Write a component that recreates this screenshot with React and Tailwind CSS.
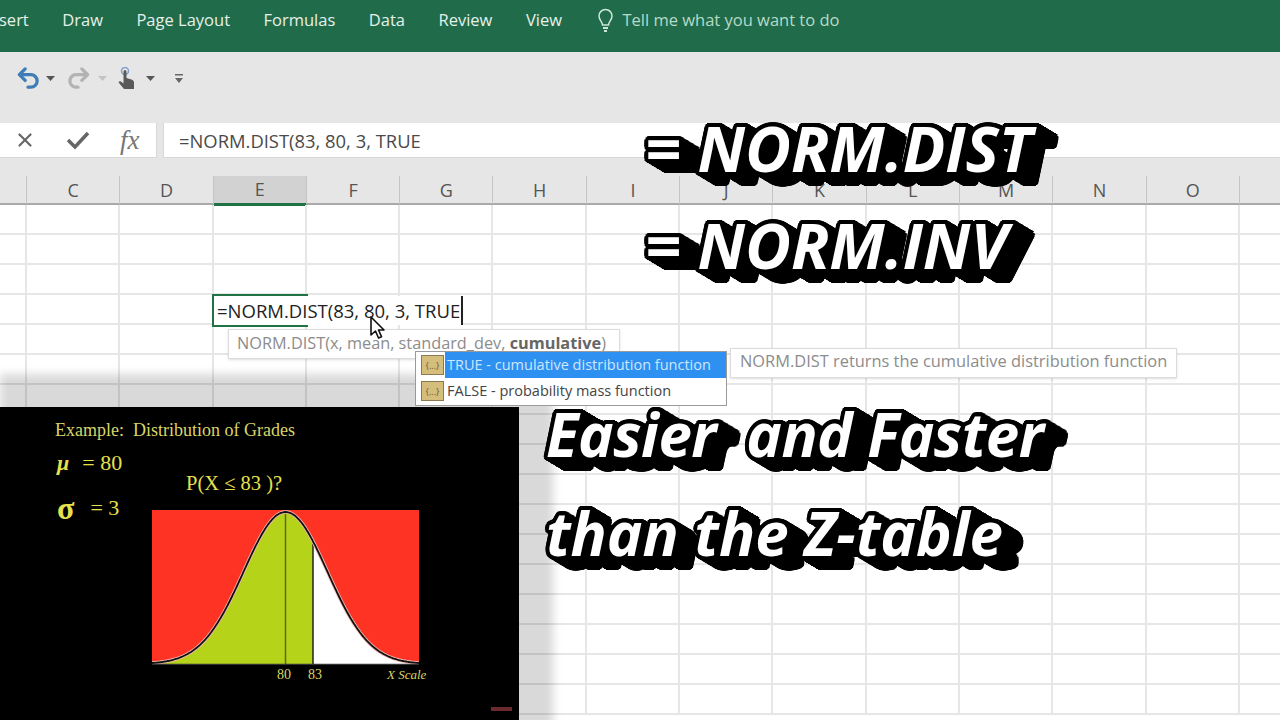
import { X } from 'lucide-react'

const tabs = ['sert', 'Draw', 'Page Layout', 'Formulas', 'Data', 'Review', 'View']
const columns = ['', 'C', 'D', 'E', 'F', 'G', 'H', 'I', 'J', 'K', 'L', 'M', 'N', 'O', '']
const rows = Array.from({ length: 17 }, (_, i) => i)

// white italic title: round black ring from text-shadow, extruded with a chain of drop-shadows
const bigText =
  "absolute whitespace-pre font-['Open_Sans',sans-serif] font-bold italic text-white [text-shadow:4px_0_0_#000,3.700px_1.500px_0_#000,2.800px_2.800px_0_#000,1.500px_3.700px_0_#000,0_4px_0_#000,-1.500px_3.700px_0_#000,-2.800px_2.800px_0_#000,-3.700px_1.500px_0_#000,-4px_0_0_#000,-3.700px_-1.500px_0_#000,-2.800px_-2.800px_0_#000,-1.500px_-3.700px_0_#000,0_-4px_0_#000,1.500px_-3.700px_0_#000,2.800px_-2.800px_0_#000,3.700px_-1.500px_0_#000] [filter:drop-shadow(1.250px_0.800px_0_#000)_drop-shadow(2.500px_1.600px_0_#000)_drop-shadow(5px_3.200px_0_#000)_drop-shadow(10px_6.400px_0_#000)]"

// bell curve for the slide, in svg units (rect is 267 x 154)
const PEAK_X = 133.5
const SD = 42
const curveY = (x) => 154 - 152 * Math.exp(-((x - PEAK_X) ** 2) / (2 * SD * SD))
const curvePoints = (from, to) => {
  const pts = []
  for (let x = from; x <= to; x += 1) pts.push(`${x} ${curveY(x).toFixed(1)}`)
  return pts
}
const curveLine = `M${curvePoints(0, 267).join(' L')}`
const greenArea = `M0 154 L${curvePoints(0, 161).join(' L')} L161 154 Z`
const whiteArea = `M161 154 L${curvePoints(161, 267).join(' L')} L267 154 Z`

const Caret = ({ color = '#555' }) => (
  <svg className="w-[9px] h-[5px]" viewBox="0 0 9 5">
    <path d="M0 0h9L4.500 5z" fill={color} />
  </svg>
)

const QuickAccess = () => (
  <div className="h-[71px] shrink-0 bg-[#e6e6e6] flex items-center pl-[17px] pb-[19px]">
    <svg className="w-[23px] h-[23px]" viewBox="0 0 23 24" fill="none" stroke="#3f7db8" strokeWidth="3.400" strokeLinecap="round" strokeLinejoin="round">
      <path d="M8 2 2 8l6 6" />
      <path d="M3 8h11a6.500 6.500 0 0 1 6.500 6.500v0A6.500 6.500 0 0 1 14 21h-3" />
    </svg>
    <div className="ml-[6px]"><Caret /></div>
    <svg className="ml-[12px] w-[23px] h-[23px]" viewBox="0 0 23 24" fill="none" stroke="#b3b3b3" strokeWidth="3.400" strokeLinecap="round" strokeLinejoin="round">
      <path d="M15 2l6 6-6 6" />
      <path d="M20 8H9a6.500 6.500 0 0 0-6.500 6.500v0A6.500 6.500 0 0 0 9 21h2" />
    </svg>
    <div className="ml-[8px]"><Caret color="#c4c4c4" /></div>
    <svg className="ml-[11px] w-[17px] h-[22px]" viewBox="0 0 17 22">
      <circle cx="7" cy="4" r="3.500" fill="none" stroke="#7f9fca" strokeWidth="1.500" />
      <path d="M5.500 4.500c0-1.600 3-1.600 3 0V11l5 1.500c1.500.5 2.500 1.500 2.500 3V22H6l-5-6c-.8-1 .4-2.500 1.800-1.500l2.700 2z" fill="#595959" />
    </svg>
    <div className="ml-[11px]"><Caret /></div>
    <svg className="ml-[20px] w-[8px] h-[9px]" viewBox="0 0 8 9">
      <path d="M0 0h8v1.500H0z" fill="#666" />
      <path d="M0 4h8L4 9z" fill="#666" />
    </svg>
  </div>
)

const FormulaBar = () => (
  <div className="h-[35px] shrink-0 bg-[#e6e6e6] flex gap-[6px]">
    <div className="w-[157px] bg-white flex items-center pl-[14px] border-b border-r border-[#d8d8d8]">
      <X size={22} strokeWidth={2.4} color="#666" />
      <svg className="ml-[30px] w-[24px] h-[20px]" viewBox="0 0 24 20" fill="none" stroke="#666" strokeWidth="3.500">
        <path d="M2 10l7 7L22 3" />
      </svg>
      <span className="ml-[30px] font-['Liberation_Serif',serif] italic text-[27px] leading-none text-[#777]">fx</span>
    </div>
    <div className="flex-1 bg-white flex items-center pl-[15px] pt-[2px] text-[18.400px] text-[#4a4a4a] border-b border-l border-[#d8d8d8]">
      =NORM.DIST(83, 80, 3, TRUE
    </div>
  </div>
)

const Sheet = () => (
  <div className="flex-1 bg-white overflow-hidden">
    <div className="h-[18px] bg-[#e6e6e6]" />
    <div className="grid grid-cols-[27px_repeat(14,93.3px)] h-[29px] bg-[#e6e6e6] border-b-2 border-[#a9a9a9]">
      {columns.map((col, i) => (
        <div
          key={i}
          className={`flex items-center justify-center text-[18px] text-[#555] border-r border-[#c4c4c4] ${col === 'E' ? 'bg-[#d2d2d2] border-b-[3px] -mb-[2px] border-b-[#217346]' : ''}`}
        >
          {col}
        </div>
      ))}
    </div>
    <div className="grid grid-cols-[27px_repeat(14,93.3px)] auto-rows-[30px]">
      {rows.map((r) =>
        columns.map((_, c) => (
          <div key={`${r}-${c}`} className="border-r-2 border-b-2 border-[#e6e6e6]" />
        ))
      )}
    </div>
  </div>
)

const Slide = () => (
  <>
    {/* soft shadow behind the slide */}
    <div className="absolute left-0 top-[374px] w-[553px] h-[360px] bg-black/15 blur-[4px]" />
    <div className="absolute left-0 top-[407px] w-[519px] h-[313px] bg-black pl-[55px] pt-[13px] flex flex-col text-[#d9d568] font-['Liberation_Serif',serif]">
      <span className="text-[18px] leading-[20px] whitespace-pre">Example:  Distribution of Grades</span>
      <div className="flex">
        <div className="w-[97px] shrink-0 flex flex-col pt-[11px] pl-[2px] gap-[19px] text-[22px] text-[#e6e04d]">
          <div className="h-[24px] leading-[24px] flex gap-[13px]">
            <b className="italic">μ</b>
            <span>= 80</span>
          </div>
          <div className="h-[28px] leading-[28px] flex gap-[16px]">
            <b className="text-[32px]">σ</b>
            <span>= 3</span>
          </div>
        </div>
        <div className="flex flex-col">
          <span className="ml-[34px] mt-[31px] h-[39px] text-[20.500px] leading-[24px] whitespace-pre text-[#e6e04d]">P(X ≤ 83 )?</span>
          <svg className="w-[267px] h-[155px]" viewBox="0 0 267 155">
            <rect width="267" height="154" fill="#ff3324" />
            <path d={greenArea} fill="#b5d318" />
            <path d={whiteArea} fill="#fff" />
            <path d="M133.500 2V154" stroke="#5c6a20" strokeWidth="1.500" />
            <path d="M161 33V154" stroke="#222" strokeWidth="1.500" />
            <path d={curveLine} fill="none" stroke="#f4b8b0" strokeWidth="3.500" />
            <path d={curveLine} fill="none" stroke="#111" strokeWidth="1.800" />
            <path d="M0 154.500H267" stroke="#333" strokeWidth="1.500" />
          </svg>
          <div className="flex mt-[2px] pl-[125px] text-[14px] leading-[16px]">
            <span>80</span>
            <span className="ml-[17px]">83</span>
            <span className="ml-[65px] text-[13px] italic whitespace-nowrap">X Scale</span>
          </div>
        </div>
      </div>
      {/* tiny channel badge in the corner of the slide */}
      <div className="absolute right-[7px] bottom-[9px] w-[21px] h-[4px] bg-[#6a2a30]" />
    </div>
  </>
)

const Autocomplete = () => (
  <div className="absolute left-[415px] top-[351px] w-[312px] h-[55px] bg-white border border-[#9a9a9a] text-[14.500px]">
    {[
      { label: 'TRUE - cumulative distribution function', active: true },
      { label: 'FALSE - probability mass function', active: false },
    ].map((item) => (
      <div key={item.label} className="h-[26px] flex items-center pl-[5px] whitespace-pre">
        <div className="w-[23px] h-[20px] shrink-0 bg-[#d5bd7c] border border-[#8d7b50] flex items-center justify-center text-[9px] leading-none text-[#6b5b35]">
          {'{...}'}
        </div>
        <span className={`ml-[1px] h-[26px] flex-1 flex items-center pl-[2px] ${item.active ? 'bg-[#2e90f0] text-[#cfe6ff]' : 'text-[#444]'}`}>
          {item.label}
        </span>
      </div>
    ))}
  </div>
)

const App = () => {
  return (
    <div className="relative w-[1280px] h-[720px] overflow-hidden flex flex-col bg-white font-['Open_Sans',sans-serif]">
      {/* Ribbon tabs */}
      <div className="h-[52px] shrink-0 bg-[#206c4a] flex items-center gap-[33.500px] -ml-[1px] pb-[12px] text-[16.500px] text-[#e6f0ea] whitespace-nowrap">
        {tabs.map((tab) => (
          <span key={tab}>{tab}</span>
        ))}
        <span className="ml-[3px] flex items-center gap-[9px] text-[#b7dac8]">
          <svg className="w-[15px] h-[24px]" viewBox="0 0 15 24" fill="none" stroke="#cfe6da" strokeWidth="1.500">
            <path d="M4.500 17c0-3-3.500-5-3.500-9a6.500 6.500 0 0 1 13 0c0 4-3.500 6-3.500 9z" />
            <path d="M5 20h5M6 23h3" strokeWidth="2" />
          </svg>
          Tell me what you want to do
        </span>
      </div>

      <QuickAccess />
      <FormulaBar />
      <Sheet />

      <Slide />

      {/* Cell being edited */}
      <div className="absolute left-[212px] top-[294px] w-[96px] h-[33px] border-2 border-[#217346]" />
      <div className="absolute left-[214px] top-[296px] h-[29px] w-[249px] bg-white flex items-center pl-[3px] text-[18.500px] text-[#222] border-r-2 border-[#222] whitespace-nowrap">
        =NORM.DIST(83, 80, 3, TRUE
      </div>

      {/* Argument hint */}
      <div className="absolute left-[228px] top-[329px] w-[392px] h-[30px] bg-white border border-[#dcdcdc] shadow-sm flex items-center pl-[8px] pb-[1px] text-[16.300px] text-[#8c8c8c] whitespace-nowrap">
        NORM.DIST(x, mean, standard_dev,&nbsp;<b className="text-[#666]">cumulative</b>)
      </div>

      <Autocomplete />

      <div className="absolute left-[730px] top-[348px] w-[447px] h-[30px] bg-white border border-[#dcdcdc] shadow-sm flex items-center pl-[9px] pb-[3px] text-[16.400px] text-[#8c8c8c] whitespace-nowrap">
        NORM.DIST returns the cumulative distribution function
      </div>

      {/* Mouse cursor */}
      <svg className="absolute left-[370px] top-[316px] w-[16px] h-[24px]" viewBox="0 0 16 24">
        <path d="M1 1v18l4.500-4 3 7 3-1.300-3-6.700H14z" fill="#fff" stroke="#111" strokeWidth="1.600" strokeLinejoin="round" />
      </svg>

      {/* Title overlays */}
      <div className={`${bigText} left-[645px] top-[101px] text-[63px]`}>= NORM.DIST</div>
      <div className={`${bigText} left-[645px] top-[198px] text-[63px]`}>= NORM.INV</div>
      <div className={`${bigText} left-[546px] top-[389px] text-[60px] tracking-[-0.5px]`}>Easier  and Faster</div>
      <div className={`${bigText} left-[546px] top-[488px] text-[60px]`}>than the Z-table</div>
    </div>
  )
}

export default App
